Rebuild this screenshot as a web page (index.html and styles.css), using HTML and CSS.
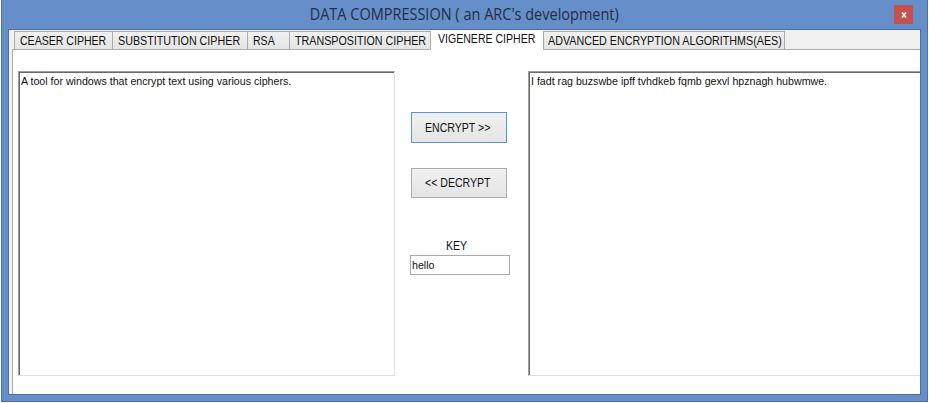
FILE: index.html
```
<!DOCTYPE html>
<html lang="en">
<head>
<meta charset="utf-8">
<title>DATA COMPRESSION ( an ARC's development)</title>
<link rel="stylesheet" href="styles.css">
</head>
<body>
<div class="window">
  <header class="titlebar">
    <h1 class="title">DATA COMPRESSION ( an ARC's development)</h1>
    <button class="close" aria-label="Close"><svg width="6" height="6" viewBox="0 0 6 6"><path d="M1 .5 5 5.5M5 .5 1 5.5" stroke="#fff" stroke-width="1.5"/></svg></button>
  </header>
  <main class="client">
    <nav class="tabs">
      <div class="tab ceaser"><span class="label">CEASER CIPHER</span></div>
      <div class="tab substitution"><span class="label wide">SUBSTITUTION CIPHER</span></div>
      <div class="tab rsa"><span class="label">RSA</span></div>
      <div class="tab transposition"><span class="label wide">TRANSPOSITION CIPHER</span></div>
      <div class="tab vigenere selected"><span class="label">VIGENERE CIPHER</span></div>
      <div class="tab aes"><span class="label wide">ADVANCED ENCRYPTION ALGORITHMS(AES)</span></div>
    </nav>
    <section class="page">
      <div class="textbox source"><span class="content">A tool for windows that encrypt text using various ciphers.</span></div>
      <div class="controls">
        <button class="action primary"><span class="label">ENCRYPT &gt;&gt;</span></button>
        <button class="action"><span class="label">&lt;&lt; DECRYPT</span></button>
        <div class="key-label"><span class="label">KEY</span></div>
        <div class="key-input"><span class="content">hello</span></div>
      </div>
      <div class="textbox result"><span class="content">I fadt rag buzswbe ipff tvhdkeb fqmb gexvl hpznagh hubwmwe.</span></div>
    </section>
  </main>
</div>
</body>
</html>
```
FILE: styles.css
```
* { box-sizing: border-box; }
body { margin: 0; width: 929px; height: 403px; overflow: hidden; background: #fff; font-family: "Liberation Sans", Arial, sans-serif; color: #111; }
.window { width: 927px; height: 402px; margin-left: 1px; padding: 0 6px 6px; background: #668ec8; border: solid #4f719f; border-width: 0 1px 1px; }
.titlebar { height: 29px; display: flex; justify-content: center; position: relative; }
.title { margin: 3px 0 0; font: 400 15.6px/22px "Open Sans", sans-serif; color: #1f3046; white-space: nowrap; transform: scaleX(.93); }
.close { position: absolute; right: 8px; top: 5px; width: 19px; height: 19px; padding: 0; border: 0; background: #c75050; display: flex; align-items: center; justify-content: center; }
.client { height: 366px; border: 1px solid #4c6f9f; background: #f0f0f0; overflow: hidden; display: flex; flex-direction: column; }
.tabs { height: 19px; flex: none; display: flex; align-items: flex-end; padding-left: 5px; }
.tab { height: 18px; flex: none; border: 1px solid #acacac; border-bottom: 0; border-right: 0; background: linear-gradient(#f0f0f0, #e5e5e5); padding: 1px 0 0 5px; line-height: 16px; white-space: nowrap; }
.label { display: inline-block; font-size: 12.8px; line-height: 16px; vertical-align: top; transform-origin: 0 50%; transform: scaleX(.825); white-space: nowrap; }
.wide { transform: scaleX(.838); }
.ceaser { width: 98px; }
.substitution { width: 135px; }
.rsa { width: 42px; }
.transposition { width: 142px; border-right: 1px solid #acacac; }
.vigenere { width: 112px; }
.aes { width: 242px; padding-left: 4px; border-right: 1px solid #acacac; }
.selected { height: 20px; margin-bottom: -1px; background: #fff; border-color: #fff; padding: 0 0 0 6px; position: relative; z-index: 1; }
.page { flex: 1; margin-left: 3px; border: solid #acacac; border-width: 1px 0 0 1px; background: #fff; display: flex; padding: 21px 0 0 5px; }
.textbox { height: 305px; flex: none; border: 1px solid #e0e0e0; border-top-color: #a0a0a0; border-left-color: #a0a0a0; box-shadow: inset 1px 1px #696969; padding: 1px 0 0 2px; overflow: hidden; line-height: 16px; }
.source { width: 377px; }
.result { width: 400px; }
.content { display: inline-block; font-size: 11.5px; line-height: 16px; vertical-align: top; transform-origin: 0 50%; white-space: nowrap; transform: scaleX(.925); }
.controls { width: 133px; flex: none; padding: 41px 0 0 16px; }
.action { display: block; width: 96px; height: 30px; margin-bottom: 25px; padding: 0 0 0 13px; text-align: left; border: 1px solid #acacac; background: linear-gradient(#f0f0f0, #e5e5e5); font-family: inherit; color: #111; }
.primary { height: 31px; border-color: #5595d7; }
.key-label { margin: 40px 0 0 35px; height: 17px; line-height: 15px; }
.key-input { width: 100px; height: 20px; margin-left: -1px; border: 1px solid #ababab; padding: 1px 0 0 1px; line-height: 16px; }
```
